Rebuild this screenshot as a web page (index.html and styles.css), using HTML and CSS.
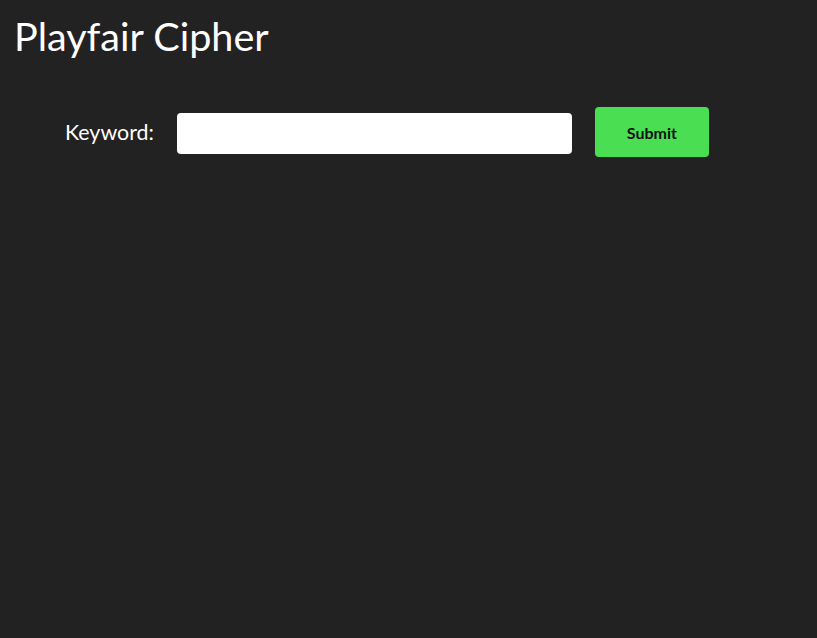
FILE: index.html
```html
<!DOCTYPE html>
<html>
<head>
<meta charset="utf-8">
<link rel="stylesheet" href="styles.css">
</head>
<body>
<h1 class="title">Playfair Cipher</h1>
<form class="form">
  <label class="label" for="kw">Keyword:</label>
  <input class="input" id="kw" type="text">
  <button class="submit" type="button">Submit</button>
</form>
</body>
</html>
```
FILE: styles.css
```css
html, body {
  margin: 0;
  padding: 0;
  background: #222222;
  font-family: Lato, "Open Sans", sans-serif;
  color: #ffffff;
  height: 100%;
}
body {
  padding: 12px 15px 12px 14px;
  box-sizing: border-box;
}
.title {
  margin: 0;
  font-weight: 400;
  font-size: 39.6px;
  line-height: 48px;
}
.form {
  display: flex;
  align-items: center;
  margin-top: 47px;
  padding-left: 51px;
}
.label {
  font-size: 21.4px;
  margin-right: 23px;
}
.input {
  width: 395px;
  height: 41px;
  box-sizing: border-box;
  border: none;
  border-radius: 4px;
  background: #ffffff;
  margin: 3px 23px 0 0;
  padding: 0 8px;
}
.submit {
  width: 114px;
  height: 50px;
  border: none;
  border-radius: 4px;
  background: #4ade52;
  color: #111;
  font-family: Lato, sans-serif;
  font-weight: 700;
  font-size: 16px;
  padding: 0;
}
```
